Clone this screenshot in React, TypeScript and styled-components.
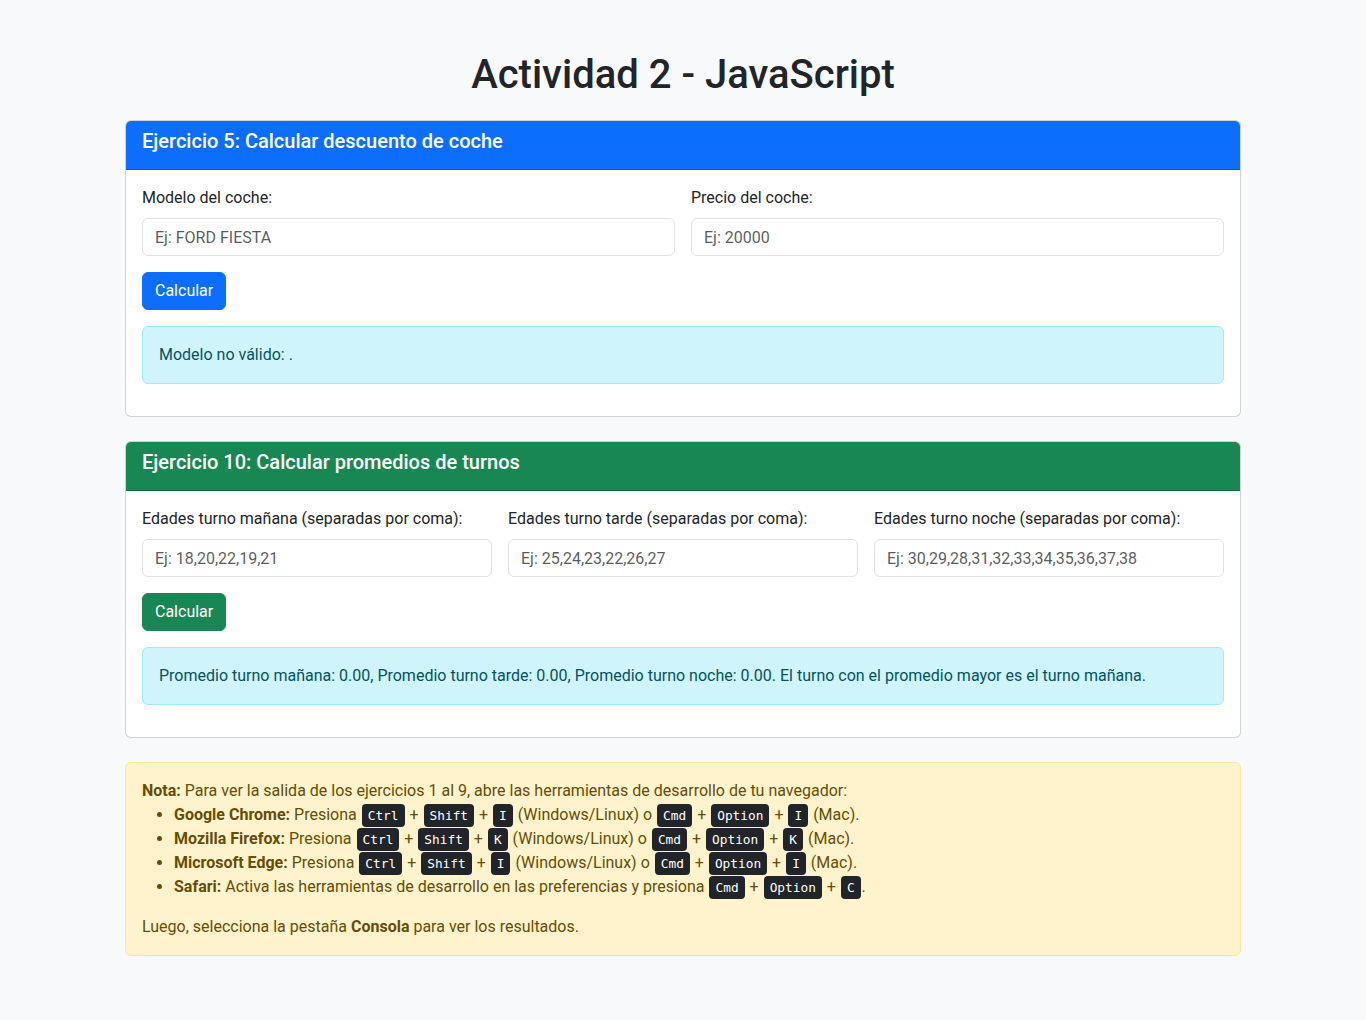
import React from 'react';
import styled, { createGlobalStyle } from 'styled-components';

const GlobalStyle = createGlobalStyle`
  *, *::before, *::after { box-sizing: border-box; }
  body {
    margin: 0;
    background: #f8f9fa;
    color: #212529;
    font-family: Roboto, "Liberation Sans", sans-serif;
    font-size: 16px;
    line-height: 1.5;
  }
`;

type Variant = 'primary' | 'success';

const colors: Record<Variant, string> = {
  primary: '#0d6efd',
  success: '#198754',
};

const Container = styled.div`
  max-width: 1140px;
  margin: 48px auto 0;
  padding: 0 12px 48px;
`;

const Title = styled.h1`
  margin: 0 0 21px;
  padding-top: 3px;
  text-align: center;
  font-size: 40px;
  line-height: 1.2;
  font-weight: 500;
`;

const Card = styled.section`
  background: #fff;
  border: 1px solid rgba(0, 0, 0, 0.175);
  border-radius: 6px;
  margin-bottom: 24px;
  overflow: hidden;
`;

const CardHeader = styled.div<{ $variant: Variant }>`
  background: ${(p) => colors[p.$variant]};
  color: #fff;
  padding: 8px 16px;
  border-bottom: 1px solid rgba(0, 0, 0, 0.175);
`;

const CardTitle = styled.h5`
  margin: 0 0 8px;
  font-size: 20px;
  line-height: 1.2;
  font-weight: 500;
`;

const CardBody = styled.div`
  padding: 16px;
`;

const FieldRow = styled.div<{ $cols: number }>`
  display: grid;
  grid-template-columns: repeat(${(p) => p.$cols}, 1fr);
  gap: 16px;
  margin-bottom: 16px;
`;

const Field = styled.div`
  display: flex;
  flex-direction: column;
`;

const Label = styled.label`
  margin-bottom: 8px;
`;

const Input = styled.input`
  display: block;
  width: 100%;
  height: 38px;
  padding: 6px 12px;
  font: inherit;
  color: #212529;
  background: #fff;
  border: 1px solid #dee2e6;
  border-radius: 6px;
  outline: none;

  &::placeholder {
    color: rgba(33, 37, 41, 0.75);
  }
`;

const Button = styled.button<{ $variant: Variant }>`
  display: block;
  font: inherit;
  line-height: 1.5;
  padding: 6px 12px;
  margin-bottom: 16px;
  border: 1px solid ${(p) => colors[p.$variant]};
  border-radius: 6px;
  background: ${(p) => colors[p.$variant]};
  color: #fff;
  cursor: pointer;
`;

const Alert = styled.div<{ $tone: 'info' | 'warning' }>`
  padding: 16px;
  margin-bottom: 16px;
  border-radius: 6px;
  border: 1px solid ${(p) => (p.$tone === 'info' ? '#9eeaf9' : '#ffe69c')};
  background: ${(p) => (p.$tone === 'info' ? '#cff4fc' : '#fff3cd')};
  color: ${(p) => (p.$tone === 'info' ? '#055160' : '#664d03')};
`;

const NoteList = styled.ul`
  margin: 0 0 16px;
  padding-left: 32px;

  strong {
    font-weight: 700;
  }
`;

const NoteText = styled.p`
  margin: 0;

  strong {
    font-weight: 700;
  }
`;

const Kbd = styled.kbd`
  font-family: "DejaVu Sans Mono", "Liberation Mono", monospace;
  font-size: 12.8px;
  padding: 4px 6px;
  margin: 0 1px;
  color: #fff;
  background: #212529;
  border-radius: 4px;
`;

const Keys: React.FC<{ keys: string[] }> = ({ keys }) => (
  <>
    {keys.map((k, i) => (
      <React.Fragment key={k + i}>
        {i > 0 && ' + '}
        <Kbd>{k}</Kbd>
      </React.Fragment>
    ))}
  </>
);

const App: React.FC = () => {
  return (
    <>
      <GlobalStyle />
      <Container>
        <Title>Actividad 2 - JavaScript</Title>

        <Card>
          <CardHeader $variant="primary">
            <CardTitle>Ejercicio 5: Calcular descuento de coche</CardTitle>
          </CardHeader>
          <CardBody>
            <FieldRow $cols={2}>
              <Field>
                <Label>Modelo del coche:</Label>
                <Input placeholder="Ej: FORD FIESTA" />
              </Field>
              <Field>
                <Label>Precio del coche:</Label>
                <Input placeholder="Ej: 20000" />
              </Field>
            </FieldRow>
            <Button $variant="primary">Calcular</Button>
            <Alert $tone="info">Modelo no válido: .</Alert>
          </CardBody>
        </Card>

        <Card>
          <CardHeader $variant="success">
            <CardTitle>Ejercicio 10: Calcular promedios de turnos</CardTitle>
          </CardHeader>
          <CardBody>
            <FieldRow $cols={3}>
              <Field>
                <Label>Edades turno mañana (separadas por coma):</Label>
                <Input placeholder="Ej: 18,20,22,19,21" />
              </Field>
              <Field>
                <Label>Edades turno tarde (separadas por coma):</Label>
                <Input placeholder="Ej: 25,24,23,22,26,27" />
              </Field>
              <Field>
                <Label>Edades turno noche (separadas por coma):</Label>
                <Input placeholder="Ej: 30,29,28,31,32,33,34,35,36,37,38" />
              </Field>
            </FieldRow>
            <Button $variant="success">Calcular</Button>
            <Alert $tone="info">
              Promedio turno mañana: 0.00, Promedio turno tarde: 0.00, Promedio turno noche: 0.00. El turno con el
              promedio mayor es el turno mañana.
            </Alert>
          </CardBody>
        </Card>

        <Alert $tone="warning">
          <NoteText>
            <strong>Nota:</strong> Para ver la salida de los ejercicios 1 al 9, abre las herramientas de desarrollo de tu
            navegador:
          </NoteText>
          <NoteList>
            <li>
              <strong>Google Chrome:</strong> Presiona <Keys keys={['Ctrl', 'Shift', 'I']} /> (Windows/Linux) o{' '}
              <Keys keys={['Cmd', 'Option', 'I']} /> (Mac).
            </li>
            <li>
              <strong>Mozilla Firefox:</strong> Presiona <Keys keys={['Ctrl', 'Shift', 'K']} /> (Windows/Linux) o{' '}
              <Keys keys={['Cmd', 'Option', 'K']} /> (Mac).
            </li>
            <li>
              <strong>Microsoft Edge:</strong> Presiona <Keys keys={['Ctrl', 'Shift', 'I']} /> (Windows/Linux) o{' '}
              <Keys keys={['Cmd', 'Option', 'I']} /> (Mac).
            </li>
            <li>
              <strong>Safari:</strong> Activa las herramientas de desarrollo en las preferencias y presiona{' '}
              <Keys keys={['Cmd', 'Option', 'C']} />.
            </li>
          </NoteList>
          <NoteText>
            Luego, selecciona la pestaña <strong>Consola</strong> para ver los resultados.
          </NoteText>
        </Alert>
      </Container>
    </>
  );
};

export default App;
